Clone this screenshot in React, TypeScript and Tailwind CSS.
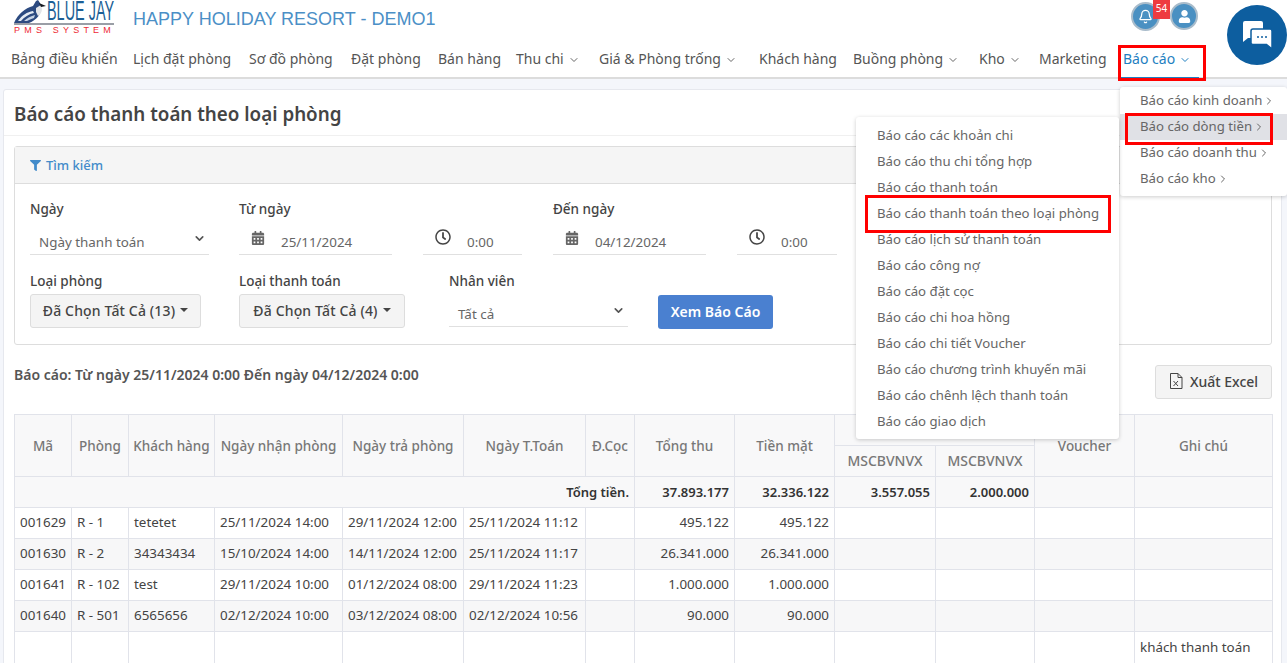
import { Bell, ChevronDown, ChevronRight } from 'lucide-react';
import { FaCalendarAlt, FaFilter, FaRegClock, FaUser } from 'react-icons/fa';

const navItems = [
  { label: 'Bảng điều khiển', width: 'w-[122px]' },
  { label: 'Lịch đặt phòng', width: 'w-[116px]' },
  { label: 'Sơ đồ phòng', width: 'w-[102px]' },
  { label: 'Đặt phòng', width: 'w-[87px]' },
  { label: 'Bán hàng', width: 'w-[78px]' },
  { label: 'Thu chi', width: 'w-[83px]', caret: true },
  { label: 'Giá & Phòng trống', width: 'w-[160px]', caret: true },
  { label: 'Khách hàng', width: 'w-[94px]' },
  { label: 'Buồng phòng', width: 'w-[126px]', caret: true },
  { label: 'Kho', width: 'w-[60px]', caret: true },
  { label: 'Marketing', width: 'w-[84px]' },
];

const cashflowItems = [
  'Báo cáo các khoản chi',
  'Báo cáo thu chi tổng hợp',
  'Báo cáo thanh toán',
  'Báo cáo thanh toán theo loại phòng',
  'Báo cáo lịch sử thanh toán',
  'Báo cáo công nợ',
  'Báo cáo đặt cọc',
  'Báo cáo chi hoa hồng',
  'Báo cáo chi tiết Voucher',
  'Báo cáo chương trình khuyến mãi',
  'Báo cáo chênh lệch thanh toán',
  'Báo cáo giao dịch',
];

const reportItems = ['Báo cáo kinh doanh', 'Báo cáo dòng tiền', 'Báo cáo doanh thu', 'Báo cáo kho'];

const columnWidths = [57, 57, 86, 128, 121, 122, 49, 100, 100, 101, 99, 100, 138];

const rows = [
  ['001629', 'R - 1', 'tetetet', '25/11/2024 14:00', '29/11/2024 12:00', '25/11/2024 11:12', '495.122', '495.122'],
  ['001630', 'R - 2', '34343434', '15/10/2024 14:00', '14/11/2024 12:00', '25/11/2024 11:17', '26.341.000', '26.341.000'],
  ['001641', 'R - 102', 'test', '29/11/2024 10:00', '01/12/2024 08:00', '29/11/2024 11:23', '1.000.000', '1.000.000'],
  ['001640', 'R - 501', '6565656', '02/12/2024 10:00', '03/12/2024 08:00', '02/12/2024 10:56', '90.000', '90.000'],
];

function Logo() {
  return (
    <div className="relative w-[100px] h-[34px] shrink-0">
      <svg className="absolute left-0 top-0" width="33" height="24" viewBox="0 0 33 24">
        <path d="M0 23 C4 14 11 8 19 6 L22 1 L24 0 L26 3 L27 7 C28 13 23 20 15 23 Z" fill="#2c4a80" />
        <path d="M4 21 C8 15 13 12 19 11 L20 13 C15 14 10 17 7 21 Z" fill="#e4ebf3" />
        <path d="M10 21 C13 18 17 16 21 15 L20 18 C17 19 15 20 13 21 Z" fill="#c4d2e4" />
        <path d="M22 8 L27 5 L28 9 C28 12 26 15 24 16 L22 12 Z" fill="#e3e5e8" />
        <path d="M25 3 L32 6 L27 7 Z" fill="#15181f" />
      </svg>
      <span className="absolute left-[33px] top-0 text-[#1c5f96] font-['Liberation_Sans',sans-serif] text-[28px] leading-[22px] whitespace-nowrap origin-left scale-x-[0.515]">
        BLUE JAY
      </span>
      <div className="absolute left-0 right-0 top-[23px] h-[2px] bg-[#9a9ea6]" />
      <span className="absolute left-0 top-[26px] text-[#ee2a35] font-['Liberation_Sans',sans-serif] text-[9px] leading-[9px] tracking-[4.2px] whitespace-nowrap">
        PMS SYSTEM
      </span>
    </div>
  );
}

function ChatGlyph() {
  return (
    <svg width="32" height="30" viewBox="0 0 32 30">
      <path d="M2 3 Q2 1 4 1 H20 Q22 1 22 3 V18 H7 L2 22 Z" fill="#fff" />
      <path d="M12 9 H29 Q31 9 31 11 V23 V29 L25.5 24.5 H12 Q10 24.5 10 23 V11 Q10 9 12 9 Z" fill="#fff" stroke="#0d5e9f" strokeWidth="1.5" />
      <circle cx="17" cy="17" r="1" fill="#0d5e9f" />
      <circle cx="21" cy="17" r="1" fill="#0d5e9f" />
      <circle cx="25" cy="17" r="1" fill="#0d5e9f" />
    </svg>
  );
}

function ExcelIcon() {
  return (
    <svg width="14" height="16" viewBox="0 0 14 16" fill="none" stroke="#444" strokeWidth="1">
      <path d="M1.5 0.5 H9 L13 4.5 V15.5 H1.5 Z" />
      <path d="M9 0.5 V4.5 H13" />
      <path d="M4.5 8 L9 13 M9 8 L4.5 13" />
    </svg>
  );
}

function Field({ label, children, className }: { label: string; children: React.ReactNode; className: string }) {
  return (
    <div className={className}>
      <div className="text-[13.5px] leading-[18px] font-medium text-[#444] h-[18px]">{label}</div>
      {children}
    </div>
  );
}

function LineSelect({ value }: { value: string }) {
  return (
    <div className="mt-[6px] h-[31px] border-b border-[#e0e0e0] flex items-center justify-between pl-[9px] pr-[3px] text-[13.4px] text-[#666]">
      <span className="pt-[6px]">{value}</span>
      <ChevronDown size={13} strokeWidth={3} className="text-[#555] -mt-[2px]" />
    </div>
  );
}

function DateInput({ value }: { value: string }) {
  return (
    <div className="mt-[6px] h-[31px] border-b border-[#e0e0e0] flex items-center text-[13.4px] text-[#666]">
      <FaCalendarAlt size={14} className="ml-[12px] -mt-[2px] text-[#666]" />
      <span className="ml-[16px] pt-[6px]">{value}</span>
    </div>
  );
}

function TimeInput() {
  return (
    <div className="mt-[6px] h-[31px] border-b border-[#e0e0e0] flex items-center text-[13.4px] text-[#666]">
      <FaRegClock size={16} className="ml-[12px] -mt-[4px] text-[#444]" />
      <span className="ml-[16px] pt-[6px]">0:00</span>
    </div>
  );
}

function MultiButton({ label }: { label: string }) {
  return (
    <div className="w-full mt-[4px] h-[34px] pb-[2px] bg-[#f4f4f4] border border-[#ddd] rounded-[3px] flex items-center justify-center gap-[5px] text-[14px] tracking-[0.15px] font-medium text-[#444]">
      <span>{label}</span>
      <span className="w-0 h-0 border-x-[4px] border-x-transparent border-t-[4px] border-t-[#444]" />
    </div>
  );
}

const headCell = 'border border-[#e1e3ea] bg-[#f8f8f9] text-[13.5px] font-medium text-[#777] text-center px-0 pt-[2px] whitespace-nowrap';
const subHeadCell = 'border border-[#e1e3ea] bg-[#f8f8f9] text-[14px] font-medium text-[#777] text-center px-0 pb-[2px] whitespace-nowrap';
const bodyCell = 'border border-[#e1e3ea] px-[5px] pb-[2px] text-[13.4px] text-[#444] whitespace-nowrap overflow-hidden h-[31px]';
const totalCell = 'border border-[#e1e3ea] px-[5px] pt-[1px] text-[13px] font-semibold text-[#333] text-right whitespace-nowrap h-[31px]';

export default function App() {
  return (
    <div className="relative w-[1287px] h-[663px] overflow-hidden bg-[#f4f6fb] font-['Noto_Sans',sans-serif]">
      {/* Header */}
      <header className="bg-white h-[79px] border-b-2 border-[#dcdcdc]">
        <div className="h-[38px] flex pl-[14px]">
          <Logo />
          <div className="ml-[19px] mt-[7px] font-['Liberation_Sans',sans-serif] text-[18px] leading-[24px] text-[#4b8fc6] whitespace-nowrap">
            HAPPY HOLIDAY RESORT - DEMO1
          </div>
        </div>
        <nav className="flex pl-[11px] mt-[10px] text-[14px] leading-[22px] text-[#555] whitespace-nowrap">
          {navItems.map((item) => (
            <div key={item.label} className={`${item.width} flex items-center gap-[4px]`}>
              <span>{item.label}</span>
              {item.caret && <ChevronDown size={12} className="text-[#666] mt-px" />}
            </div>
          ))}
          <div className="flex items-center gap-[4px] text-[#1f7fc1]">
            <span>Báo cáo</span>
            <ChevronDown size={12} className="mt-px" />
          </div>
        </nav>
      </header>

      {/* Card */}
      <main className="ml-[3px] mr-[5px] mt-[10px] bg-white border border-[#e6e8ee] rounded-[3px] h-[600px]">
        <div className="h-[46px] border-b border-[#f0f0f0] flex items-center pl-[10px] pt-[4px]">
          <h1 className="text-[18.8px] font-semibold text-[#444]">Báo cáo thanh toán theo loại phòng</h1>
        </div>

        <div className="pl-[10px] pr-[9px] pt-[10px]">
          <section className="border border-[#ddd] rounded-[3px] h-[199px]">
            <div className="h-[37px] pt-px bg-[#f5f5f5] border-b border-[#ddd] flex items-center gap-[5px] pl-[15px] text-[13px] font-medium text-[#428bca]">
              <FaFilter size={11} />
              <span>Tìm kiếm</span>
            </div>
            <div className="pl-[15px] pt-[16px]">
              <div className="flex">
                <Field label="Ngày" className="w-[179px]">
                  <LineSelect value="Ngày thanh toán" />
                </Field>
                <Field label="Từ ngày" className="w-[153px] ml-[30px]">
                  <DateInput value="25/11/2024" />
                </Field>
                <div className="w-[99px] ml-[31px] pt-[18px]">
                  <TimeInput />
                </div>
                <Field label="Đến ngày" className="w-[153px] ml-[31px]">
                  <DateInput value="04/12/2024" />
                </Field>
                <div className="w-[100px] ml-[31px] pt-[18px]">
                  <TimeInput />
                </div>
              </div>
              <div className="flex mt-[17px]">
                <Field label="Loại phòng" className="w-[171px]">
                  <MultiButton label="Đã Chọn Tất Cả (13)" />
                </Field>
                <Field label="Loại thanh toán" className="w-[166px] ml-[38px]">
                  <MultiButton label="Đã Chọn Tất Cả (4)" />
                </Field>
                <Field label="Nhân viên" className="w-[179px] ml-[44px]">
                  <LineSelect value="Tất cả" />
                </Field>
                <button className="ml-[30px] mt-[23px] w-[115px] h-[34px] pb-[2px] bg-[#4a80d0] rounded-[3px] text-white text-[14px] font-semibold">
                  Xem Báo Cáo
                </button>
              </div>
            </div>
          </section>

          <div className="flex justify-between mt-[20px] h-[34px]">
            <div className="text-[14px] leading-[20px] font-semibold text-[#555]">
              Báo cáo: Từ ngày 25/11/2024 0:00 Đến ngày 04/12/2024 0:00
            </div>
            <button className="w-[117px] h-[34px] pb-[2px] bg-[#f4f4f4] border border-[#ddd] rounded-[3px] flex items-center justify-center gap-[7px] text-[14px] font-medium text-[#444]">
              <ExcelIcon />
              Xuất Excel
            </button>
          </div>

          <table className="mt-[15px] w-[1258px] table-fixed border-collapse">
            <colgroup>
              {columnWidths.map((w, i) => (
                <col key={i} style={{ width: w }} />
              ))}
            </colgroup>
            <thead>
              <tr className="h-[31px]">
                <th rowSpan={2} className={headCell}>Mã</th>
                <th rowSpan={2} className={headCell}>Phòng</th>
                <th rowSpan={2} className={headCell}>Khách hàng</th>
                <th rowSpan={2} className={headCell}>Ngày nhận phòng</th>
                <th rowSpan={2} className={headCell}>Ngày trả phòng</th>
                <th rowSpan={2} className={headCell}>Ngày T.Toán</th>
                <th rowSpan={2} className={headCell}>Đ.Cọc</th>
                <th rowSpan={2} className={headCell}>Tổng thu</th>
                <th rowSpan={2} className={headCell}>Tiền mặt</th>
                <th colSpan={2} className={headCell}></th>
                <th rowSpan={2} className={headCell}>Voucher</th>
                <th rowSpan={2} className={headCell}>Ghi chú</th>
              </tr>
              <tr className="h-[31px]">
                <th className={subHeadCell}>MSCBVNVX</th>
                <th className={subHeadCell}>MSCBVNVX</th>
              </tr>
            </thead>
            <tbody>
              <tr className="bg-[#f8f8f9]">
                <td colSpan={7} className={totalCell}>Tổng tiền.</td>
                <td className={totalCell}>37.893.177</td>
                <td className={totalCell}>32.336.122</td>
                <td className={totalCell}>3.557.055</td>
                <td className={totalCell}>2.000.000</td>
                <td className={totalCell}></td>
                <td className={totalCell}></td>
              </tr>
              {rows.map((r, i) => (
                <tr key={r[0]} className={i % 2 === 1 ? 'bg-[#f7f7f8]' : 'bg-white'}>
                  <td className={bodyCell}>{r[0]}</td>
                  <td className={bodyCell}>{r[1]}</td>
                  <td className={bodyCell}>{r[2]}</td>
                  <td className={bodyCell}>{r[3]}</td>
                  <td className={bodyCell}>{r[4]}</td>
                  <td className={bodyCell}>{r[5]}</td>
                  <td className={bodyCell}></td>
                  <td className={`${bodyCell} text-right`}>{r[6]}</td>
                  <td className={`${bodyCell} text-right`}>{r[7]}</td>
                  <td className={bodyCell}></td>
                  <td className={bodyCell}></td>
                  <td className={bodyCell}></td>
                  <td className={bodyCell}></td>
                </tr>
              ))}
              <tr>
                {columnWidths.slice(0, 12).map((_, i) => (
                  <td key={i} className="border border-[#e1e3ea] h-[60px]"></td>
                ))}
                <td className="border border-[#e1e3ea] h-[60px] px-[5px] pt-[5px] align-top text-[13.4px] leading-[20px] text-[#444]">
                  khách thanh toán
                </td>
              </tr>
            </tbody>
          </table>
        </div>
      </main>

      {/* Top right icons */}
      <div className="absolute left-[1131px] top-[2px] w-[29px] h-[29px] rounded-full bg-[#4a90c2] border-2 border-[#a9bccb] flex items-center justify-center text-white">
        <Bell size={15} strokeWidth={2} />
      </div>
      <div className="absolute left-[1153px] top-0 w-[17px] h-[19px] bg-[#ee3b3f] text-white text-[10px] leading-[17px] text-center">54</div>
      <div className="absolute left-[1170px] top-[2px] w-[28px] h-[28px] rounded-full bg-[#4a90c2] border-2 border-[#a9bccb] flex items-center justify-center text-white">
        <FaUser size={13} />
      </div>
      <div className="absolute left-[1227px] top-[5px] w-[60px] h-[60px] rounded-full bg-[#0d5e9f] flex items-center justify-center">
        <ChatGlyph />
      </div>

      {/* Báo cáo active underline */}
      <div className="absolute left-[1120px] top-[77px] w-[79px] h-px bg-[#1f7fc1]" />

      {/* Reports menu */}
      <div className="absolute left-[1120px] top-[87px] w-[167px] h-[109px] bg-white rounded-[3px] shadow-[0_1px_4px_rgba(0,0,0,0.2)] py-[1px] text-[13.2px] text-[#666]">
        {reportItems.map((label, i) => (
          <div key={label} className={`h-[26px] pl-[20px] flex items-center gap-[1px] whitespace-nowrap ${i === 1 ? 'bg-[#e0e1e6]' : ''}`}>
            <span>{label}</span>
            <ChevronRight size={12} />
          </div>
        ))}
      </div>

      {/* Cashflow submenu */}
      <div className="absolute left-[856px] top-[117px] w-[263px] h-[322px] bg-white rounded-[3px] shadow-[0_1px_4px_rgba(0,0,0,0.2)] pt-[6px] text-[13.2px] text-[#666]">
        {cashflowItems.map((label) => (
          <div key={label} className="h-[26px] pl-[21px] flex items-center whitespace-nowrap">{label}</div>
        ))}
      </div>

      {/* Red annotations */}
      <div className="absolute left-[1118px] top-[45px] w-[88px] h-[36px] border-[3px] border-[#ff0000]" />
      <div className="absolute left-[1125px] top-[113px] w-[148px] h-[32px] border-[3px] border-[#ff0000]" />
      <div className="absolute left-[865px] top-[195px] w-[246px] h-[38px] border-[3px] border-[#ff0000]" />
    </div>
  );
}
